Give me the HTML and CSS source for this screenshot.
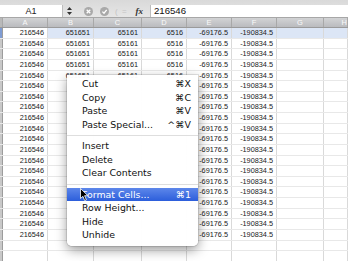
FILE: index.html
```html
<!DOCTYPE html>
<html>
<head>
    <meta charset="UTF-8" />
    <title>Sheet1</title>
    <link rel="stylesheet" href="styles.css">
</head>
<body>
    <div class="bar">
        <div class="namebox">A1</div>
        <div class="stepper">
            <svg width="5" height="8" viewBox="0 0 5 8"><path d="M2.5 0 L5 3 L0 3 Z M2.5 8 L5 5 L0 5 Z" fill="#333"/></svg>
        </div>
        <div class="tools">
            <svg class="btn" width="9" height="9" viewBox="0 0 9 9"><circle cx="4.5" cy="4.5" r="4.5" fill="#a9a9a9"/><path d="M2.7 2.7 L6.3 6.3 M6.3 2.7 L2.7 6.3" stroke="#fff" stroke-width="1.3"/></svg>
            <svg class="btn" width="9" height="9" viewBox="0 0 9 9"><circle cx="4.5" cy="4.5" r="4.5" fill="#a9a9a9"/><path d="M2.4 4.6 L4 6.2 L6.7 2.8" stroke="#fff" stroke-width="1.3" fill="none"/></svg>
            <span class="eq">( =</span>
            <span class="fx">fx</span>
        </div>
        <div class="formula">216546</div>
    </div>

    <div class="sheet">
        <div class="row head"><span class="rh"></span><span>A</span><span>B</span><span>C</span><span>D</span><span>E</span><span>F</span><span>G</span><span>H</span></div>
        <div class="row sel"><span class="rh"></span><span class="active">216546</span><span>651651</span><span>65161</span><span>6516</span><span>-69176.5</span><span>-190834.5</span><span></span><span></span></div>
        <div class="row"><span class="rh"></span><span>216546</span><span>651651</span><span>65161</span><span>6516</span><span>-69176.5</span><span>-190834.5</span><span></span><span></span></div>
        <div class="row"><span class="rh"></span><span>216546</span><span>651651</span><span>65161</span><span>6516</span><span>-69176.5</span><span>-190834.5</span><span></span><span></span></div>
        <div class="row"><span class="rh"></span><span>216546</span><span>651651</span><span>65161</span><span>6516</span><span>-69176.5</span><span>-190834.5</span><span></span><span></span></div>
        <div class="row"><span class="rh"></span><span>216546</span><span>651651</span><span>65161</span><span>6516</span><span>-69176.5</span><span>-190834.5</span><span></span><span></span></div>
        <!-- rows below sit under the context menu: B..D hidden -->
        <div class="row"><span class="rh"></span><span>216546</span><span></span><span></span><span></span><span>-69176.5</span><span>-190834.5</span><span></span><span></span></div>
        <div class="row"><span class="rh"></span><span>216546</span><span></span><span></span><span></span><span>-69176.5</span><span>-190834.5</span><span></span><span></span></div>
        <div class="row"><span class="rh"></span><span>216546</span><span></span><span></span><span></span><span>-69176.5</span><span>-190834.5</span><span></span><span></span></div>
        <div class="row"><span class="rh"></span><span>216546</span><span></span><span></span><span></span><span>-69176.5</span><span>-190834.5</span><span></span><span></span></div>
        <div class="row"><span class="rh"></span><span>216546</span><span></span><span></span><span></span><span>-69176.5</span><span>-190834.5</span><span></span><span></span></div>
        <div class="row"><span class="rh"></span><span>216546</span><span></span><span></span><span></span><span>-69176.5</span><span>-190834.5</span><span></span><span></span></div>
        <div class="row"><span class="rh"></span><span>216546</span><span></span><span></span><span></span><span>-69176.5</span><span>-190834.5</span><span></span><span></span></div>
        <div class="row"><span class="rh"></span><span>216546</span><span></span><span></span><span></span><span>-69176.5</span><span>-190834.5</span><span></span><span></span></div>
        <div class="row"><span class="rh"></span><span>216546</span><span></span><span></span><span></span><span>-69176.5</span><span>-190834.5</span><span></span><span></span></div>
        <div class="row"><span class="rh"></span><span>216546</span><span></span><span></span><span></span><span>-69176.5</span><span>-190834.5</span><span></span><span></span></div>
        <div class="row"><span class="rh"></span><span>216546</span><span></span><span></span><span></span><span>-69176.5</span><span>-190834.5</span><span></span><span></span></div>
        <div class="row"><span class="rh"></span><span>216546</span><span></span><span></span><span></span><span>-69176.5</span><span>-190834.5</span><span></span><span></span></div>
        <div class="row"><span class="rh"></span><span>216546</span><span></span><span></span><span></span><span>-69176.5</span><span>-190834.5</span><span></span><span></span></div>
        <div class="row"><span class="rh"></span><span>216546</span><span></span><span></span><span></span><span>-69176.5</span><span>-190834.5</span><span></span><span></span></div>
        <div class="row"><span class="rh"></span><span>216546</span><span></span><span></span><span></span><span>-69176.5</span><span>-190834.5</span><span></span><span></span></div>
        <div class="row"><span class="rh"></span><span></span><span></span><span></span><span></span><span></span><span></span><span></span><span></span></div>
        <div class="row"><span class="rh"></span><span></span><span></span><span></span><span></span><span></span><span></span><span></span><span></span></div>
    </div>

    <ul class="menu">
        <li><span>Cut</span><span class="key">⌘X</span></li>
        <li><span>Copy</span><span class="key">⌘C</span></li>
        <li><span>Paste</span><span class="key">⌘V</span></li>
        <li><span>Paste Special...</span><span class="key">^⌘V</span></li>
        <li class="sep"></li>
        <li><span>Insert</span></li>
        <li><span>Delete</span></li>
        <li><span>Clear Contents</span></li>
        <li class="sep"></li>
        <li class="on"><span>Format Cells...</span><span class="key">⌘1</span></li>
        <li><span>Row Height...</span></li>
        <li><span>Hide</span></li>
        <li><span>Unhide</span></li>
    </ul>

    <svg class="cursor" width="9" height="14" viewBox="0 0 9 14"><path d="M0.5 0.5 L0.5 10.5 L2.9 8.3 L4.7 12.6 L6.4 11.9 L4.6 7.7 L7.9 7.7 Z" fill="#000" stroke="#fff" stroke-width="0.8"/></svg>
</body>
</html>
```

FILE: styles.css
```css
*{ margin:0; padding:0; box-sizing:border-box;}
body{
    position: relative;
    width: 348px;
    height: 261px;
    overflow: hidden;
    background: #fff;
    font-family: "Liberation Sans", Arial, sans-serif;
}

/* formula bar */
.bar{
    display: flex;
    align-items: flex-end;
    height: 18px;
    padding-top: 5px;
    background: linear-gradient(#d9d9d9, #e6e6e6);
    border-bottom: 1px solid #a7a7a7;
}
.namebox{
    width: 63px;
    height: 12px;
    background: #fff;
    border-right: 1px solid #bdbdbd;
    color: #222;
    font-size: 9px;
    line-height: 12px;
    text-align: center;
}
.stepper{
    display: flex;
    align-items: center;
    justify-content: center;
    width: 13px;
    height: 12px;
}
.tools{
    display: flex;
    align-items: center;
    width: 74px;
    height: 12px;
    padding-left: 8px;
    gap: 7px;
}
.tools .eq{
    color: #c4c4c4;
    font-size: 8px;
    letter-spacing: 1px;
    margin-left: -1px;
}
.tools .fx{
    color: #333;
    font-family: "Liberation Serif", serif;
    font-style: italic;
    font-weight: bold;
    font-size: 9px;
    margin-left: 1px;
}
.formula{
    flex: 1;
    height: 12px;
    background: #fff;
    border-left: 1px solid #bdbdbd;
    padding-left: 3px;
    color: #111;
    font-size: 9.6px;
    line-height: 12px;
}

/* grid */
.sheet{ overflow: hidden;}
.row{
    display: flex;
    height: 10.63px;
    border-bottom: 1px solid #e8e8e8;
}
.row span{
    flex: none;
    height: 100%;
    border-right: 1px solid #d9d9d9;
    padding-right: 3px;
    color: #222;
    font-size: 7.3px;
    line-height: 9.6px;
    text-align: right;
    white-space: nowrap;
    overflow: hidden;
}
.row span:nth-child(1){ width: 3px; padding: 0; background: #c8c8c8; border-right-color: #9c9c9c;}
.row span:nth-child(2){ width: 45px;}
.row span:nth-child(3){ width: 46px;}
.row span:nth-child(4){ width: 48px;}
.row span:nth-child(5){ width: 45px;}
.row span:nth-child(6){ width: 45px;}
.row span:nth-child(7){ width: 45px;}
.row span:nth-child(8){ width: 47px;}
.row span:nth-child(9){ width: 24px;}

.row.head{
    height: 10px;
    background: linear-gradient(#d2d3d5, #babbbe);
    border-bottom: 1px solid #9a9a9a;
}
.row.head span{
    padding: 0;
    border-right-color: #a8a8a8;
    color: #fafafa;
    font-size: 7.5px;
    line-height: 9px;
    text-align: center;
}
.row.head span:nth-child(1){ background: #b9b9b9;}
.row.head span:nth-child(9){ text-align: right; padding-right: 0;}

.row.sel span{ background: #dce6f6;}
.row.sel span.active{ background: #fff;}
.row.sel span:nth-child(1){ background: #7f9cd3;}

/* context menu */
.menu{
    position: absolute;
    left: 67px;
    top: 75px;
    width: 131px;
    padding: 2px 0 4px;
    background: rgba(255,255,255,.97);
    border-radius: 0 0 5px 5px;
    box-shadow: 0 4px 12px rgba(0,0,0,.4), 0 0 0 1px rgba(0,0,0,.1);
    color: #111;
    font-family: "DejaVu Sans", sans-serif;
    font-size: 9.4px;
    list-style: none;
}
.menu li{
    display: flex;
    justify-content: space-between;
    height: 13.5px;
    line-height: 13.5px;
    padding: 0 7px 0 15px;
}
.menu li.sep{
    height: 8px;
    padding: 0;
    border-top: 4px solid transparent;
}
.menu li.sep::after{
    content: "";
    display: block;
    width: 100%;
    height: 1px;
    background: #dedede;
}
.menu li.on{
    background: linear-gradient(#5d87ea, #2c5edb);
    color: #fff;
}

.cursor{
    position: absolute;
    left: 80px;
    top: 188px;
}
```
